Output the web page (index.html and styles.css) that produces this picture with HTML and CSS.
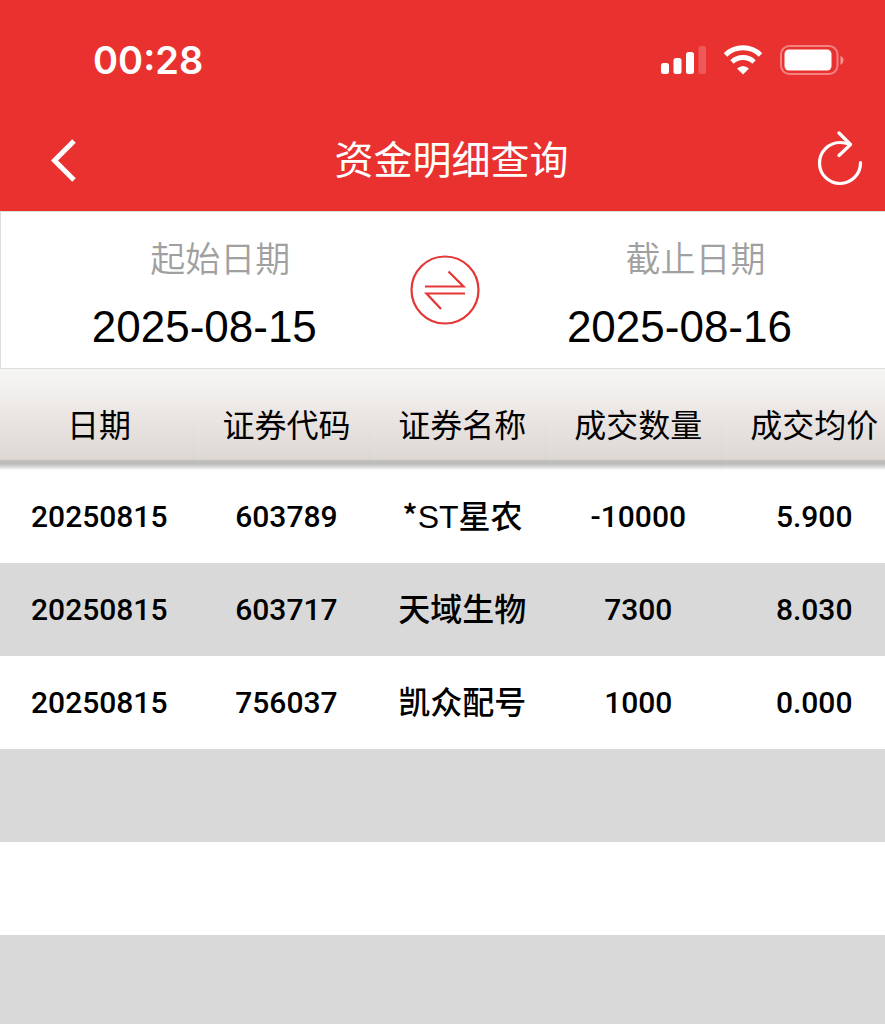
FILE: index.html
```html
<!DOCTYPE html>
<html lang="zh-CN">
<head>
    <meta charset="UTF-8">
    <meta name="viewport" content="width=device-width, initial-scale=1.0">
    <title>资金明细查询</title>
    <link rel="stylesheet" href="styles.css">
</head>
<body>
    <header class="header">
        <div class="status-bar">
            <span class="time">00:28</span>
            <div class="status-icons">
                <svg width="46" height="30" viewBox="0 0 46 30" fill="#fff">
                    <rect x="1" y="18" width="8" height="11" rx="2.5"/>
                    <rect x="13.5" y="13" width="8" height="16" rx="2.5"/>
                    <rect x="26" y="7" width="8" height="22" rx="2.5"/>
                    <rect x="38.5" y="1" width="7.5" height="28" rx="2.5" opacity=".2"/>
                </svg>
                <svg width="40" height="30" viewBox="0 0 40 30" fill="none" stroke="#fff" stroke-width="5">
                    <path d="M2.5 10 A25 25 0 0 1 37.5 10"/>
                    <path d="M9 17 A16 16 0 0 1 31 17"/>
                    <path d="M20 29.5 L14 23.5 Q20 18.5 26 23.5 Z" fill="#fff" stroke="none"/>
                </svg>
                <svg width="64" height="30" viewBox="0 0 64 30">
                    <rect x="1" y="1" width="56.5" height="28" rx="8.5" fill="none" stroke="#fff" stroke-width="2" opacity=".4"/>
                    <rect x="4.5" y="4.5" width="47" height="21" rx="4.5" fill="#fff"/>
                    <path d="M60.5 11 Q63.5 12.5 63.5 15.5 Q63.5 18 60.5 20 Z" fill="#fff" opacity=".5"/>
                </svg>
            </div>
        </div>
        <nav class="nav-bar">
            <button class="nav-button" type="button" aria-label="返回">
                <svg width="28" height="44" viewBox="0 0 28 44" fill="none" stroke="#fff" stroke-width="5">
                    <path d="M24 2 L4.5 21.5 L24 41"/>
                </svg>
            </button>
            <h1 class="title">资金明细查询</h1>
            <button class="nav-button" type="button" aria-label="刷新">
                <svg width="46" height="60" viewBox="0 0 46 60" fill="none" stroke="#fff" stroke-width="3.2" stroke-linecap="round" stroke-linejoin="round">
                    <path d="M43.5 31.5 A20.5 20.5 0 1 1 23 11.5 Q28 11.5 33 13.5"/>
                    <path d="M22 2 L33.5 13.5 L22 24.5"/>
                </svg>
            </button>
        </nav>
    </header>

    <!-- 日期范围 -->
    <form class="range">
        <div class="date">
            <label for="startDate">起始日期</label>
            <input id="startDate" type="text" value="2025-08-15" readonly>
        </div>
        <button class="swap" type="button" aria-label="切换">
            <svg width="70" height="70" viewBox="0 0 70 70" fill="none" stroke="#e53535" stroke-width="2.2">
                <circle cx="35" cy="35" r="33.5"/>
                <path d="M15 31.5 H53.5 L38.5 16.5"/>
                <path d="M55 38.5 H16.5 L31 54"/>
            </svg>
        </button>
        <div class="date">
            <label for="endDate">截止日期</label>
            <input id="endDate" type="text" value="2025-08-16" readonly>
        </div>
    </form>

    <!-- 明细 -->
    <main class="list">
        <table class="records">
            <thead>
                <tr>
                    <th class="col-date">日期</th>
                    <th>证券代码</th>
                    <th>证券名称</th>
                    <th>成交数量</th>
                    <th>成交均价</th>
                </tr>
            </thead>
            <tbody>
                <tr>
                    <td>20250815</td>
                    <td>603789</td>
                    <td class="name">*<span class="latin">ST</span>星农</td>
                    <td>-10000</td>
                    <td>5.900</td>
                </tr>
                <tr>
                    <td>20250815</td>
                    <td>603717</td>
                    <td class="name">天域生物</td>
                    <td>7300</td>
                    <td>8.030</td>
                </tr>
                <tr>
                    <td>20250815</td>
                    <td>756037</td>
                    <td class="name">凯众配号</td>
                    <td>1000</td>
                    <td>0.000</td>
                </tr>
                <tr><td colspan="5"></td></tr>
                <tr><td colspan="5"></td></tr>
                <tr><td colspan="5"></td></tr>
            </tbody>
        </table>
    </main>
</body>
</html>
```

FILE: styles.css
```css
* {
    box-sizing: border-box;
}

body {
    margin: 0;
    height: 100vh;
    display: flex;
    flex-direction: column;
    overflow: hidden;
    background-color: #fff;
    color: #000;
    font-family: "Liberation Sans", "Noto Sans CJK SC", sans-serif;
}

button {
    padding: 0;
    border: none;
    background: none;
    cursor: pointer;
}

svg {
    display: block;
}

.header {
    flex: none;
    background-color: #e93130;
    color: #fff;
}

.status-bar {
    display: flex;
    justify-content: space-between;
    align-items: center;
    height: 110px;
    padding: 10px 41px 0 93px;
}

.time {
    font-family: Inter, sans-serif;
    font-size: 38px;
    font-weight: 600;
}

.status-icons {
    display: flex;
    gap: 17px;
}

.nav-bar {
    display: grid;
    grid-template-columns: 46px 1fr 46px;
    align-items: center;
    height: 101px;
    padding: 0 22px 0 50px;
}

.nav-button {
    justify-self: start;
}

.title {
    margin: 0;
    padding-right: 10px;
    font-size: 39px;
    font-weight: 400;
    line-height: 48px;
    text-align: center;
}

.range {
    flex: none;
    display: grid;
    grid-template-columns: 46% 8.5% 44.5%;
    align-items: center;
    padding: 23px 0 11px;
    border: 1px solid #ddd;
    border-right: none;
}

.date {
    display: flex;
    flex-direction: column;
    gap: 12px;
    text-align: center;
}

.date label {
    padding-left: 32px;
    font-size: 35px;
    font-weight: 350;
    line-height: 50px;
    color: #a0a0a0;
}

.date input {
    width: 100%;
    height: 60px;
    padding: 0;
    border: none;
    background: none;
    color: #000;
    font-family: inherit;
    font-size: 44px;
    text-align: center;
}

.swap {
    justify-self: center;
    padding-bottom: 12px;
}

.list {
    flex: 1;
    overflow: hidden;
}

.records {
    width: 102vw;
    table-layout: fixed;
    border-collapse: collapse;
    text-align: center;
}

.records thead {
    background: linear-gradient(#f6f6f5 0, #f1efed 24px, #ece7e5 42px, #ddd8d3 90px, #bebcbb 92px, #bebcbb 95px, #e4e4e4 99px, #fff 101px);
}

.records th {
    height: 101px;
    padding: 12px 0 0;
    font-size: 32px;
    font-weight: 400;
    line-height: 48px;
    border-right: 1px solid rgba(255, 255, 255, 0.1);
}

.records .col-date {
    width: 22%;
}

.records td {
    height: 93px;
    padding: 0;
    font-family: Roboto, sans-serif;
    font-size: 30px;
    font-weight: 500;
}

.records tbody tr:nth-child(even) {
    background-color: #d9d9d9;
}

.records .name {
    padding-bottom: 6px;
    font-family: "Noto Sans CJK SC", sans-serif;
    font-size: 32px;
}

.latin {
    font-family: "Liberation Sans", sans-serif;
    font-weight: 400;
}
```
